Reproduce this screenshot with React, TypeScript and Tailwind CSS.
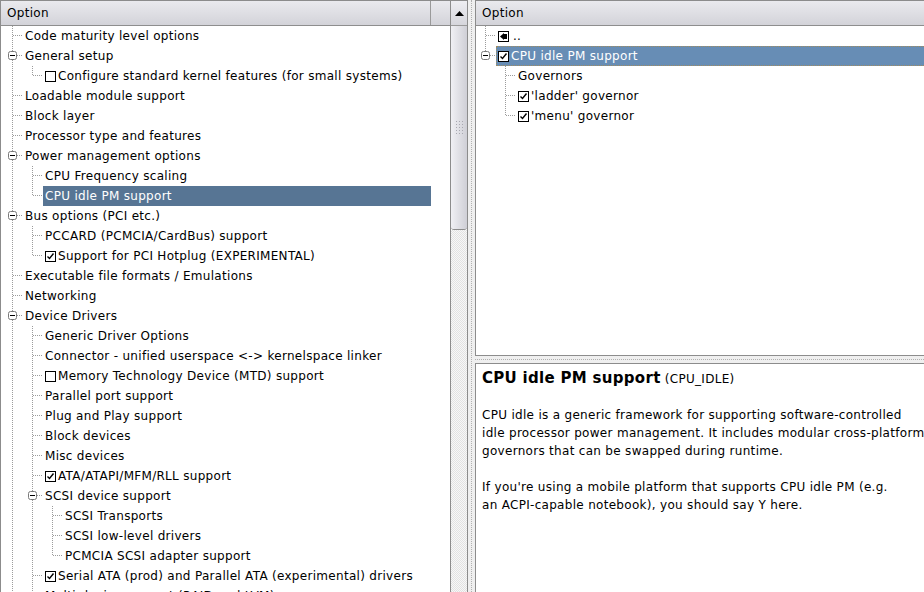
import React from 'react'

type Row = {
  text: string
  anc: boolean[]
  last: boolean
  exp?: boolean
  cb?: 'on' | 'off'
  back?: boolean
  sel?: 'dim' | 'focus'
}

const L0 = [true]
const L1 = [true, true]

const leftRows: Row[] = [
  { text: 'Code maturity level options', anc: [], last: false },
  { text: 'General setup', anc: [], last: false, exp: true },
  { text: 'Configure standard kernel features (for small systems)', anc: L0, last: true, cb: 'off' },
  { text: 'Loadable module support', anc: [], last: false },
  { text: 'Block layer', anc: [], last: false },
  { text: 'Processor type and features', anc: [], last: false },
  { text: 'Power management options', anc: [], last: false, exp: true },
  { text: 'CPU Frequency scaling', anc: L0, last: false },
  { text: 'CPU idle PM support', anc: L0, last: true, sel: 'dim' },
  { text: 'Bus options (PCI etc.)', anc: [], last: false, exp: true },
  { text: 'PCCARD (PCMCIA/CardBus) support', anc: L0, last: false },
  { text: 'Support for PCI Hotplug (EXPERIMENTAL)', anc: L0, last: true, cb: 'on' },
  { text: 'Executable file formats / Emulations', anc: [], last: false },
  { text: 'Networking', anc: [], last: false },
  { text: 'Device Drivers', anc: [], last: false, exp: true },
  { text: 'Generic Driver Options', anc: L0, last: false },
  { text: 'Connector - unified userspace <-> kernelspace linker', anc: L0, last: false },
  { text: 'Memory Technology Device (MTD) support', anc: L0, last: false, cb: 'off' },
  { text: 'Parallel port support', anc: L0, last: false },
  { text: 'Plug and Play support', anc: L0, last: false },
  { text: 'Block devices', anc: L0, last: false },
  { text: 'Misc devices', anc: L0, last: false },
  { text: 'ATA/ATAPI/MFM/RLL support', anc: L0, last: false, cb: 'on' },
  { text: 'SCSI device support', anc: L0, last: false, exp: true },
  { text: 'SCSI Transports', anc: L1, last: false },
  { text: 'SCSI low-level drivers', anc: L1, last: false },
  { text: 'PCMCIA SCSI adapter support', anc: L1, last: true },
  { text: 'Serial ATA (prod) and Parallel ATA (experimental) drivers', anc: L0, last: false, cb: 'on' },
  { text: 'Multi-device support (RAID and LVM)', anc: L0, last: false },
]

const rightRows: Row[] = [
  { text: '..', anc: [], last: false, back: true },
  { text: 'CPU idle PM support', anc: [], last: true, exp: true, cb: 'on', sel: 'focus' },
  { text: 'Governors', anc: [false], last: false },
  { text: "'ladder' governor", anc: [false], last: false, cb: 'on' },
  { text: "'menu' governor", anc: [false], last: true, cb: 'on' },
]

const dot = { stroke: '#9c9c9c', strokeDasharray: '1 1' }

function Branch({ last, exp }: { last: boolean; exp?: boolean }) {
  return (
    <svg width="20" height="20" className="shrink-0">
      <line x1="9.5" y1="0" x2="9.5" y2={exp ? 5 : 10} {...dot} />
      {!last && <line x1="9.5" y1={exp ? 14 : 10} x2="9.5" y2="20" {...dot} />}
      <line x1={exp ? 14 : 10} y1="9.5" x2="19" y2="9.5" {...dot} />
      {exp && (
        <g>
          <rect x="5.5" y="5.5" width="8" height="8" rx="2" fill="#fff" stroke="#7a7a7a" />
          <line x1="7" y1="9.5" x2="12" y2="9.5" stroke="#000" />
        </g>
      )}
    </svg>
  )
}

function Pass({ cont }: { cont: boolean }) {
  return (
    <svg width="20" height="20" className="shrink-0">
      {cont && <line x1="9.5" y1="0" x2="9.5" y2="20" {...dot} />}
    </svg>
  )
}

function Check({ on }: { on: boolean }) {
  return (
    <svg width="11" height="11" className="mr-[2px] shrink-0">
      <rect x="0.5" y="0.5" width="10" height="10" fill="#fff" stroke="#000" />
      {on && <path d="M2.5 5.5 L4.5 7.5 L8.5 2.5" fill="none" stroke="#000" strokeWidth="1.4" />}
    </svg>
  )
}

function BackIcon() {
  return (
    <svg width="11" height="11" className="mr-[4px] shrink-0">
      <rect x="0.5" y="0.5" width="10" height="10" fill="#fff" stroke="#000" />
      <path d="M2 5.5 L6 2 L6 9 Z" fill="#000" />
      <rect x="6" y="3" width="3" height="5" fill="#000" />
    </svg>
  )
}

function TreeRow({ row, pad }: { row: Row; pad: string }) {
  const selCls =
    row.sel === 'dim'
      ? 'bg-[#577594] text-white'
      : row.sel === 'focus'
        ? 'bg-[#678db5] text-white outline outline-1 outline-dotted outline-[#a08c62] -outline-offset-1'
        : 'text-black'
  return (
    <div className={`flex h-5 items-center ${pad}`}>
      {row.anc.map((c, i) => (
        <Pass key={i} cont={c} />
      ))}
      <Branch last={row.last} exp={row.exp} />
      <div className={`flex h-5 flex-1 items-center whitespace-nowrap pl-[2px] ${selCls}`}>
        {row.back && <BackIcon />}
        {row.cb && <Check on={row.cb === 'on'} />}
        <span>{row.text}</span>
      </div>
    </div>
  )
}

function Header({ split }: { split?: boolean }) {
  return (
    <div className="flex h-[25px] shrink-0 border-b border-[#8e8e8e] bg-gradient-to-b from-[#eaeaee] to-[#d3d3d9]">
      <div className={`flex items-center pl-[6px] ${split ? 'w-[430px] border-r border-[#9a9a9a]' : 'flex-1'}`}>
        Option
      </div>
      {split && <div className="flex-1" />}
    </div>
  )
}

export default function App() {
  return (
    <div className="flex h-[592px] w-[924px] overflow-hidden bg-[#efefef] font-['DejaVu_Sans',sans-serif] text-[12px] tracking-[0.3px] text-black">
      {/* left list */}
      <div className="flex w-[468px] shrink-0 border-l border-t border-[#8c8c8c] bg-white">
        <div className="flex w-[449px] flex-col overflow-hidden">
          <Header split />
          <div className="w-[430px] overflow-hidden">
            {leftRows.map((r, i) => (
              <TreeRow key={i} row={r} pad="pl-[2px]" />
            ))}
          </div>
        </div>
        <div className="flex w-[18px] flex-col border-l border-r border-[#8c8c8c]">
          <div className="flex h-[25px] items-center justify-center border-b border-[#9a9a9a] bg-gradient-to-b from-[#eeeef2] to-[#d6d6dc]">
            <svg width="9" height="5">
              <path d="M0 5 L4.5 0 L9 5 Z" fill="#000" />
            </svg>
          </div>
          <div className="flex h-[204px] items-center justify-center rounded-b-[3px] border-b border-[#8c8c8c] bg-gradient-to-r from-[#f0f0f4] to-[#cfcfd6]">
            <div className="grid grid-cols-3 gap-[2px]">
              {Array.from({ length: 15 }).map((_, i) => (
                <div key={i} className="h-[1px] w-[1px] bg-[#a8a8b0]" />
              ))}
            </div>
          </div>
          <div className="flex-1 bg-[repeating-conic-gradient(#e2e2e2_0%_25%,#f7f7f7_0%_50%)] bg-[length:2px_2px]" />
        </div>
      </div>

      {/* vertical splitter */}
      <div className="flex w-[7px] shrink-0 justify-center">
        <div className="h-full border-l border-dotted border-[#b0b0b0]" />
      </div>

      {/* right side */}
      <div className="flex flex-1 flex-col">
        <div className="flex h-[356px] flex-col border-b border-l border-t border-[#8c8c8c] bg-white">
          <Header />
          <div className="overflow-hidden">
            {rightRows.map((r, i) => (
              <TreeRow key={i} row={r} pad="pl-0" />
            ))}
          </div>
        </div>
        <div className="flex h-[7px] items-center">
          <div className="w-full border-t border-dotted border-[#b0b0b0]" />
        </div>
        <div className="flex-1 overflow-hidden border-l border-t border-[#8c8c8c] bg-white px-[6px] pt-[5px] leading-[18px]">
          <div className="whitespace-nowrap">
            <span className="text-[15px] font-bold">CPU idle PM support</span> (CPU_IDLE)
          </div>
          <div className="h-[18px]" />
          <div className="whitespace-nowrap">CPU idle is a generic framework for supporting software-controlled</div>
          <div className="whitespace-nowrap">idle processor power management. It includes modular cross-platform</div>
          <div className="whitespace-nowrap">governors that can be swapped during runtime.</div>
          <div className="h-[18px]" />
          <div className="whitespace-nowrap">If you're using a mobile platform that supports CPU idle PM (e.g.</div>
          <div className="whitespace-nowrap">an ACPI-capable notebook), you should say Y here.</div>
        </div>
      </div>
    </div>
  )
}
